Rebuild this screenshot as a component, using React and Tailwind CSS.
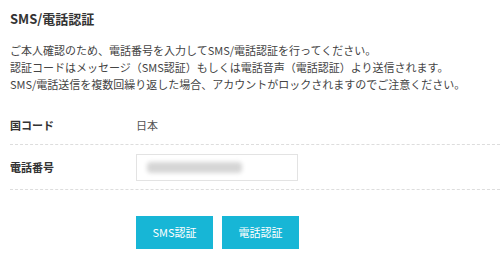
export default function App() {
  return (
    <div className="w-[500px] h-[270px] bg-white overflow-hidden pl-[10px] pt-[10px] text-[#333] font-['Noto_Sans_CJK_JP',sans-serif]">
      {/* Title */}
      <h1 className="text-[13px] leading-[18px] font-bold">SMS/電話認証</h1>

      {/* Description */}
      <div className="mt-[14px] text-[11px] leading-[17px] text-[#444]">
        <p>ご本人確認のため、電話番号を入力してSMS/電話認証を行ってください。</p>
        <p>認証コードはメッセージ（SMS認証）もしくは電話音声（電話認証）より送信されます。</p>
        <p>SMS/電話送信を複数回繰り返した場合、アカウントがロックされますのでご注意ください。</p>
      </div>

      {/* Form rows */}
      <div className="mt-[13px]">
        <div className="flex items-center h-[39px] border-b border-dashed border-[#ddd] text-[11px]">
          <div className="w-[126px] font-bold">国コード</div>
          <div className="text-[#555]">日本</div>
        </div>
        <div className="flex items-center h-[45px] border-b border-dashed border-[#ddd] text-[11px]">
          <div className="w-[126px] font-bold">電話番号</div>
          <div className="w-[162px] h-[27px] border border-[#e3e3e3] flex items-center">
            <div className="ml-[10px] w-[95px] h-[11px] bg-[#d6d6d6] blur-[2px] rounded"></div>
          </div>
        </div>
      </div>

      {/* Buttons */}
      <div className="mt-[26px] pl-[126px] flex gap-[9px]">
        <button className="w-[77px] h-[33px] bg-[#17b6d6] text-white text-[11px]">SMS認証</button>
        <button className="w-[77px] h-[33px] bg-[#17b6d6] text-white text-[11px]">電話認証</button>
      </div>
    </div>
  );
}
